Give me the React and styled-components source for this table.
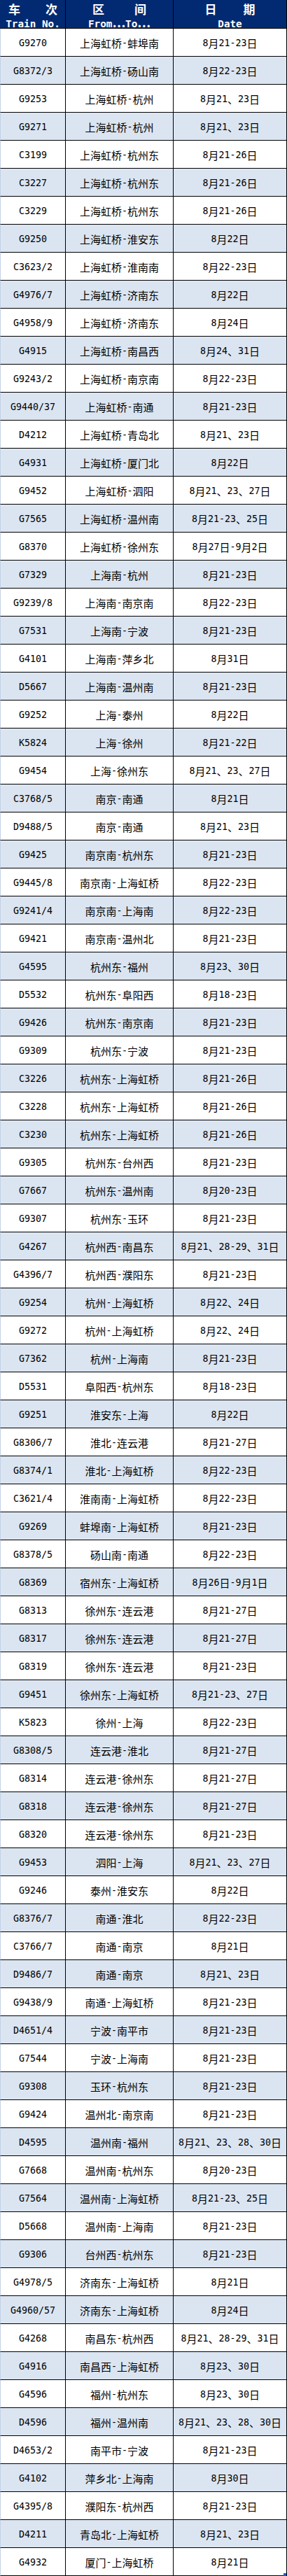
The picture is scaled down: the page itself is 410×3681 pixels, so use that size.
import styled, { createGlobalStyle } from 'styled-components';

const GlobalStyle = createGlobalStyle`
  body {
    margin: 0;
    background: #ffffff;
  }
`;

const NAVY = '#022a72';
const STRIPE = '#dbe5f1';

const Table = styled.div`
  position: relative;
  width: 410px;
  font-family: "Noto Sans CJK SC", sans-serif;
  color: #000;
`;

const Row = styled.div`
  display: grid;
  grid-template-columns: 93px 154px 162px;
  height: ${(p) => (p.$head ? 41 : 40)}px;
  box-sizing: border-box;
  border-left: 1px solid ${(p) => (p.$head ? NAVY : '#c3d1e6')};
  border-bottom: 1px solid #000;
  background: ${(p) => (p.$head ? NAVY : p.$alt ? STRIPE : '#ffffff')};
`;

const Cell = styled.div`
  display: flex;
  align-items: center;
  justify-content: center;
  padding-top: 2px;
  border-right: 1px solid #000;
  font-size: 15px;
  line-height: 1;
  white-space: nowrap;
`;

const HeadCell = styled.div`
  display: flex;
  flex-direction: column;
  align-items: center;
  padding-top: 3px;
  border-right: 1px solid #000;
  color: #ffffff;
  font-weight: 700;
  white-space: nowrap;
`;

const HeadZh = styled.div`
  display: flex;
  justify-content: space-between;
  width: ${(p) => p.$w}px;
  height: 19px;
  font-size: 17px;
  line-height: 19px;
`;

const HeadEn = styled.div`
  height: 19px;
  font-size: 17px;
  line-height: 19px;
`;

const Latin = styled.span`
  font-family: "DejaVu Sans Mono", "Liberation Mono", monospace;
  font-size: ${(p) => (p.$head ? 14.3 : 13.3)}px;
`;

const Handle = styled.span`
  position: absolute;
  right: 1px;
  bottom: 0;
  width: 4px;
  height: 4px;
  background: #1f5bbf;
`;

const mixed = (text, head) =>
  text
    .split(/([\x00-\x7f]+)/)
    .filter(Boolean)
    .map((part, i) =>
      /^[\x00-\x7f]+$/.test(part) ? (
        <Latin key={i} $head={head}>
          {part}
        </Latin>
      ) : (
        <span key={i}>{part}</span>
      )
    );

const DATA = `
G9270 上海虹桥-蚌埠南 8月21-23日
G8372/3 上海虹桥-砀山南 8月22-23日
G9253 上海虹桥-杭州 8月21、23日
G9271 上海虹桥-杭州 8月21、23日
C3199 上海虹桥-杭州东 8月21-26日
C3227 上海虹桥-杭州东 8月21-26日
C3229 上海虹桥-杭州东 8月21-26日
G9250 上海虹桥-淮安东 8月22日
C3623/2 上海虹桥-淮南南 8月22-23日
G4976/7 上海虹桥-济南东 8月22日
G4958/9 上海虹桥-济南东 8月24日
G4915 上海虹桥-南昌西 8月24、31日
G9243/2 上海虹桥-南京南 8月22-23日
G9440/37 上海虹桥-南通 8月21-23日
D4212 上海虹桥-青岛北 8月21、23日
G4931 上海虹桥-厦门北 8月22日
G9452 上海虹桥-泗阳 8月21、23、27日
G7565 上海虹桥-温州南 8月21-23、25日
G8370 上海虹桥-徐州东 8月27日-9月2日
G7329 上海南-杭州 8月21-23日
G9239/8 上海南-南京南 8月22-23日
G7531 上海南-宁波 8月21-23日
G4101 上海南-萍乡北 8月31日
D5667 上海南-温州南 8月21-23日
G9252 上海-泰州 8月22日
K5824 上海-徐州 8月21-22日
G9454 上海-徐州东 8月21、23、27日
C3768/5 南京-南通 8月21日
D9488/5 南京-南通 8月21、23日
G9425 南京南-杭州东 8月21-23日
G9445/8 南京南-上海虹桥 8月22-23日
G9241/4 南京南-上海南 8月22-23日
G9421 南京南-温州北 8月21-23日
G4595 杭州东-福州 8月23、30日
D5532 杭州东-阜阳西 8月18-23日
G9426 杭州东-南京南 8月21-23日
G9309 杭州东-宁波 8月21-23日
C3226 杭州东-上海虹桥 8月21-26日
C3228 杭州东-上海虹桥 8月21-26日
C3230 杭州东-上海虹桥 8月21-26日
G9305 杭州东-台州西 8月21-23日
G7667 杭州东-温州南 8月20-23日
G9307 杭州东-玉环 8月21-23日
G4267 杭州西-南昌东 8月21、28-29、31日
G4396/7 杭州西-濮阳东 8月21-23日
G9254 杭州-上海虹桥 8月22、24日
G9272 杭州-上海虹桥 8月22、24日
G7362 杭州-上海南 8月21-23日
D5531 阜阳西-杭州东 8月18-23日
G9251 淮安东-上海 8月22日
G8306/7 淮北-连云港 8月21-27日
G8374/1 淮北-上海虹桥 8月22-23日
C3621/4 淮南南-上海虹桥 8月22-23日
G9269 蚌埠南-上海虹桥 8月21-23日
G8378/5 砀山南-南通 8月22-23日
G8369 宿州东-上海虹桥 8月26日-9月1日
G8313 徐州东-连云港 8月21-27日
G8317 徐州东-连云港 8月21-27日
G8319 徐州东-连云港 8月21-23日
G9451 徐州东-上海虹桥 8月21-23、27日
K5823 徐州-上海 8月22-23日
G8308/5 连云港-淮北 8月21-27日
G8314 连云港-徐州东 8月21-27日
G8318 连云港-徐州东 8月21-27日
G8320 连云港-徐州东 8月21-23日
G9453 泗阳-上海 8月21、23、27日
G9246 泰州-淮安东 8月22日
G8376/7 南通-淮北 8月22-23日
C3766/7 南通-南京 8月21日
D9486/7 南通-南京 8月21、23日
G9438/9 南通-上海虹桥 8月21-23日
D4651/4 宁波-南平市 8月21-23日
G7544 宁波-上海南 8月21-23日
G9308 玉环-杭州东 8月21-23日
G9424 温州北-南京南 8月21-23日
D4595 温州南-福州 8月21、23、28、30日
G7668 温州南-杭州东 8月20-23日
G7564 温州南-上海虹桥 8月21-23、25日
D5668 温州南-上海南 8月21-23日
G9306 台州西-杭州东 8月21-23日
G4978/5 济南东-上海虹桥 8月21日
G4960/57 济南东-上海虹桥 8月24日
G4268 南昌东-杭州西 8月21、28-29、31日
G4916 南昌西-上海虹桥 8月23、30日
G4596 福州-杭州东 8月23、30日
D4596 福州-温州南 8月21、23、28、30日
D4653/2 南平市-宁波 8月21-23日
G4102 萍乡北-上海南 8月30日
G4395/8 濮阳东-杭州西 8月21-23日
D4211 青岛北-上海虹桥 8月21、23日
G4932 厦门-上海虹桥 8月21日
`
  .trim()
  .split('\n')
  .map((line) => line.trim().split(/\s+/));

function Header() {
  return (
    <Row $head>
      <HeadCell>
        <HeadZh $w={70}>
          <span>车</span>
          <span>次</span>
        </HeadZh>
        <HeadEn>{mixed('Train No.', true)}</HeadEn>
      </HeadCell>
      <HeadCell>
        <HeadZh $w={77}>
          <span>区</span>
          <span>间</span>
        </HeadZh>
        <HeadEn>{mixed('From…To…', true)}</HeadEn>
      </HeadCell>
      <HeadCell>
        <HeadZh $w={72}>
          <span>日</span>
          <span>期</span>
        </HeadZh>
        <HeadEn>{mixed('Date', true)}</HeadEn>
      </HeadCell>
    </Row>
  );
}

export default function App() {
  return (
    <>
      <GlobalStyle />
      <Table>
        <Header />
        {DATA.map(([train, route, date], index) => (
          <Row key={train} $alt={index % 2 === 1}>
            <Cell>{mixed(train)}</Cell>
            <Cell>{mixed(route)}</Cell>
            <Cell>{mixed(date)}</Cell>
          </Row>
        ))}
        <Handle />
      </Table>
    </>
  );
}
